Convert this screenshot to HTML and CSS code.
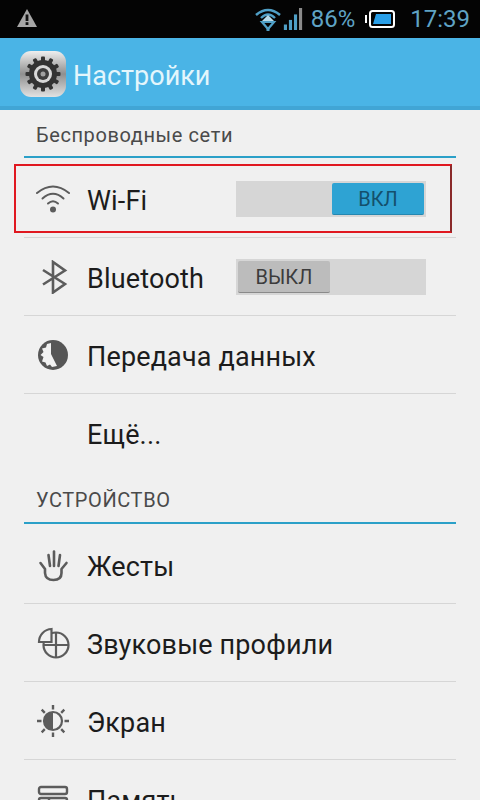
FILE: index.html
```html
<!DOCTYPE html>
<html lang="ru">
<head>
    <meta charset="UTF-8">
    <meta name="viewport" content="width=device-width, initial-scale=1.0">
    <title>Настройки</title>
    <link rel="stylesheet" href="styles.css">
</head>
<body>
    <div class="status-bar">
        <svg class="warn-icon" width="22" height="20" viewBox="0 0 22 20">
            <path d="M11 1 L21 19 H1 Z" fill="#a6a6a6"/>
            <rect x="9.6" y="6.5" width="2.8" height="6.5" fill="#111"/>
            <rect x="9.6" y="14.2" width="2.8" height="2.8" fill="#111"/>
        </svg>
        <div class="status-right">
            <svg width="28" height="24" viewBox="0 0 28 24">
                <path d="M2 8 Q14 -2 26 8" fill="none" stroke="#4f9fc6" stroke-width="2.6"/>
                <path d="M7 11 Q14 4 21 11" fill="none" stroke="#4f9fc6" stroke-width="2.4"/>
                <path d="M14 8 L20 14 H8 Z" fill="#b9dbe9"/>
                <path d="M8 15 H20 L14 22 Z" fill="none" stroke="#4f9fc6" stroke-width="2.2"/>
                <rect x="12.5" y="21" width="3" height="3" fill="#4f9fc6"/>
            </svg>
            <svg class="signal" width="21" height="22" viewBox="0 0 21 24">
                <rect x="0" y="18" width="3.4" height="6" fill="#4f9fc6"/>
                <rect x="5.5" y="13" width="3.4" height="11" fill="#4f9fc6"/>
                <rect x="11" y="7" width="3.4" height="17" fill="#4f9fc6"/>
                <rect x="16.5" y="0" width="3.4" height="24" fill="#8a8a8a"/>
            </svg>
            <span class="status-text pct">86%</span>
            <svg class="battery" width="30" height="18" viewBox="0 0 30 18">
                <rect x="0" y="5" width="2" height="8" fill="#fff"/>
                <rect x="5" y="1" width="24" height="16" rx="2.5" fill="none" stroke="#fff" stroke-width="2"/>
                <path d="M11 4 H26 V14 H8 Z" fill="#2a9fe8"/>
            </svg>
            <span class="status-text time">17:39</span>
        </div>
    </div>

    <div class="action-bar">
        <div class="app-icon">
            <svg width="38" height="38" viewBox="0 0 38 38">
                <g fill="#333">
                    <circle cx="19" cy="19" r="14"/>
                    <rect x="17" y="1.5" width="4" height="35" rx="1"/>
                    <rect x="17" y="1.5" width="4" height="35" rx="1" transform="rotate(30 19 19)"/>
                    <rect x="17" y="1.5" width="4" height="35" rx="1" transform="rotate(60 19 19)"/>
                    <rect x="17" y="1.5" width="4" height="35" rx="1" transform="rotate(90 19 19)"/>
                    <rect x="17" y="1.5" width="4" height="35" rx="1" transform="rotate(120 19 19)"/>
                    <rect x="17" y="1.5" width="4" height="35" rx="1" transform="rotate(150 19 19)"/>
                </g>
                <circle cx="19" cy="19" r="9" fill="#d8d8d8"/>
                <circle cx="19" cy="19" r="6" fill="#3c3c3c"/>
                <circle cx="19" cy="19" r="2.5" fill="#a0a0a0"/>
            </svg>
        </div>
        <span class="app-title">Настройки</span>
    </div>

    <div class="settings-list">
        <div class="section-header first">Беспроводные сети</div>

        <div class="row top-row">
            <svg class="row-icon" width="34" height="34" viewBox="0 0 34 34">
                <g fill="none" stroke="#5c5c5c" stroke-width="2" stroke-linecap="round">
                    <path d="M1 11 Q17 -2 33 11"/>
                    <path d="M6.5 16.5 Q17 7 27.5 16.5"/>
                    <path d="M12 21.5 Q17 17 22 21.5"/>
                </g>
                <circle cx="17" cy="27.5" r="3" fill="#5c5c5c"/>
            </svg>
            <span class="row-label">Wi-Fi</span>
            <div class="switch on"><span class="thumb">ВКЛ</span></div>
            <div class="highlight"></div>
        </div>

        <div class="row">
            <svg class="row-icon" width="34" height="34" viewBox="0 0 34 34">
                <path d="M7 10 L29 24 L17 32.5 V2 L29 10.5 L7 24.5" fill="none" stroke="#5c5c5c" stroke-width="2.6"/>
            </svg>
            <span class="row-label">Bluetooth</span>
            <div class="switch"><span class="thumb">ВЫКЛ</span></div>
        </div>

        <div class="row">
            <svg class="row-icon" width="34" height="34" viewBox="0 0 34 34">
                <circle cx="17" cy="17" r="15" fill="#565656"/>
                <path d="M15 5 V16 L21 28 L16 29 L14 26.5 L11 28 L9.5 24.5 L6 23.5 L7.5 19 L4.5 17 L7.5 14 L6 10.5 L10 9.5 L11 6 Z" fill="#f1f1f1"/>
            </svg>
            <span class="row-label">Передача данных</span>
        </div>

        <div class="row no-line">
            <span class="row-icon"></span>
            <span class="row-label">Ещё...</span>
        </div>

        <div class="section-header">УСТРОЙСТВО</div>

        <div class="row top-row">
            <svg class="row-icon" width="34" height="34" viewBox="0 0 34 34">
                <g fill="none" stroke="#5c5c5c" stroke-width="2.6" stroke-linecap="round" stroke-linejoin="round">
                    <path d="M4.5 15 L9 21 V25 Q9.5 32 17.5 32 Q25.5 32 25.5 25 V21 L30.5 15"/>
                    <path d="M12.5 7 L14 18"/>
                    <path d="M18 3.5 V18"/>
                    <path d="M24 7 L22.500 18"/>
                </g>
            </svg>
            <span class="row-label">Жесты</span>
        </div>

        <div class="row">
            <svg class="row-icon" width="34" height="34" viewBox="0 0 34 34">
                <g fill="none" stroke="#5c5c5c" stroke-width="2.2">
                    <circle cx="20" cy="19" r="12.5"/>
                    <path d="M20 6.5 V31.5 M7.5 19 H32.5"/>
                </g>
                <path d="M15.5 3 A13 13 0 0 0 3 16 H15.5 Z" fill="#f1f1f1" stroke="#5c5c5c" stroke-width="2.2"/>
            </svg>
            <span class="row-label">Звуковые профили</span>
        </div>

        <div class="row">
            <svg class="row-icon" width="34" height="34" viewBox="0 0 34 34">
                <circle cx="17" cy="17" r="9" fill="none" stroke="#5c5c5c" stroke-width="2.2"/>
                <path d="M17 8 A9 9 0 0 0 17 26 Z" fill="#5c5c5c"/>
                <g stroke="#5c5c5c" stroke-width="2.4">
                    <path d="M17 1 V5.5 M17 28.5 V33 M1 17 H5.5 M28.5 17 H33"/>
                    <path d="M5.7 5.7 L8.8 8.8 M25.2 25.2 L28.3 28.3 M5.7 28.3 L8.8 25.2 M25.2 8.8 L28.3 5.7"/>
                </g>
            </svg>
            <span class="row-label">Экран</span>
        </div>

        <div class="row">
            <svg class="row-icon" width="34" height="34" viewBox="0 0 34 34">
                <g fill="none" stroke="#5c5c5c" stroke-width="2.4">
                    <rect x="3" y="5" width="28" height="7" rx="2"/>
                    <rect x="3" y="16" width="28" height="8" rx="2"/>
                    <path d="M13 16 V24"/>
                </g>
            </svg>
            <span class="row-label">Память</span>
        </div>
    </div>
</body>
</html>
```

FILE: styles.css
```css
html, body {
    margin: 0;
    height: 100%;
    overflow: hidden;
}
body {
    width: 480px;
    height: 800px;
    background: #f0f0f0;
    font-family: Roboto, "Noto Sans", sans-serif;
    color: #1c1c1c;
}
.status-bar {
    height: 38px;
    background: #040404;
    display: flex;
    align-items: center;
    justify-content: space-between;
    padding: 0 10px 0 16px;
    box-sizing: border-box;
}
.warn-icon {
    margin-bottom: 2px;
}
.status-right {
    display: flex;
    align-items: center;
}
.signal {
    margin-left: 1px;
}
.status-text {
    color: #5fa3c4;
    font-size: 24px;
}
.pct {
    margin-left: 7px;
}
.battery {
    margin-left: 10px;
}
.time {
    margin-left: 15px;
}
.action-bar {
    height: 65px;
    padding-top: 3px;
    background: #4ab4e6;
    border-bottom: 4px solid #41a5d5;
    display: flex;
    align-items: center;
    padding-left: 20px;
}
.app-icon {
    width: 46px;
    height: 46px;
    border-radius: 11px;
    background: linear-gradient(180deg, #efefef, #8f8f8f 50%, #e2e2e2);
    display: flex;
    align-items: center;
    justify-content: center;
}
.app-title {
    color: #e4f6fc;
    font-size: 27px;
    margin: 4px 0 0 7px;
}
.settings-list {
    padding: 0 24px;
}
.section-header {
    height: 52px;
    box-sizing: border-box;
    border-bottom: 2px solid #2ba0c8;
    font-size: 20px;
    color: #4a4a4a;
    padding: 16px 0 0 12px;
    letter-spacing: 0.6px;
}
.section-header.first {
    height: 48px;
    padding-top: 13px;
}
.row {
    height: 78px;
    box-sizing: border-box;
    border-bottom: 1px solid #d6d6d6;
    display: flex;
    align-items: center;
    position: relative;
}
.top-row {
    height: 80px;
    padding-top: 2px;
}
.no-line {
    border-bottom: none;
}
.row-icon {
    width: 34px;
    height: 34px;
    margin-left: 12px;
    flex-shrink: 0;
}
.row-label {
    font-size: 27px;
    letter-spacing: 0.15px;
    margin-left: 17px;
    padding-top: 4px;
    flex: 1;
}
.switch {
    width: 190px;
    height: 36px;
    margin-right: 30px;
    background: #d6d6d6;
    display: flex;
    padding: 2px;
    box-sizing: border-box;
}
.switch.on {
    justify-content: flex-end;
}
.thumb {
    width: 92px;
    padding-top: 2px;
    background: #bcbcbc;
    border-bottom: 1px solid #8a8a8a;
    border-radius: 2px;
    font-size: 20px;
    color: #3c3c3c;
    display: flex;
    align-items: center;
    justify-content: center;
    box-sizing: border-box;
}
.switch.on .thumb {
    background: #2ea3d3;
    border-bottom-color: #2587b0;
    color: #14506c;
}
.highlight {
    position: absolute;
    left: -10px;
    right: 4px;
    top: 6px;
    bottom: 4px;
    border: 2px solid #e01820;
    border-right-color: #8a2a2a;
    pointer-events: none;
}
```
